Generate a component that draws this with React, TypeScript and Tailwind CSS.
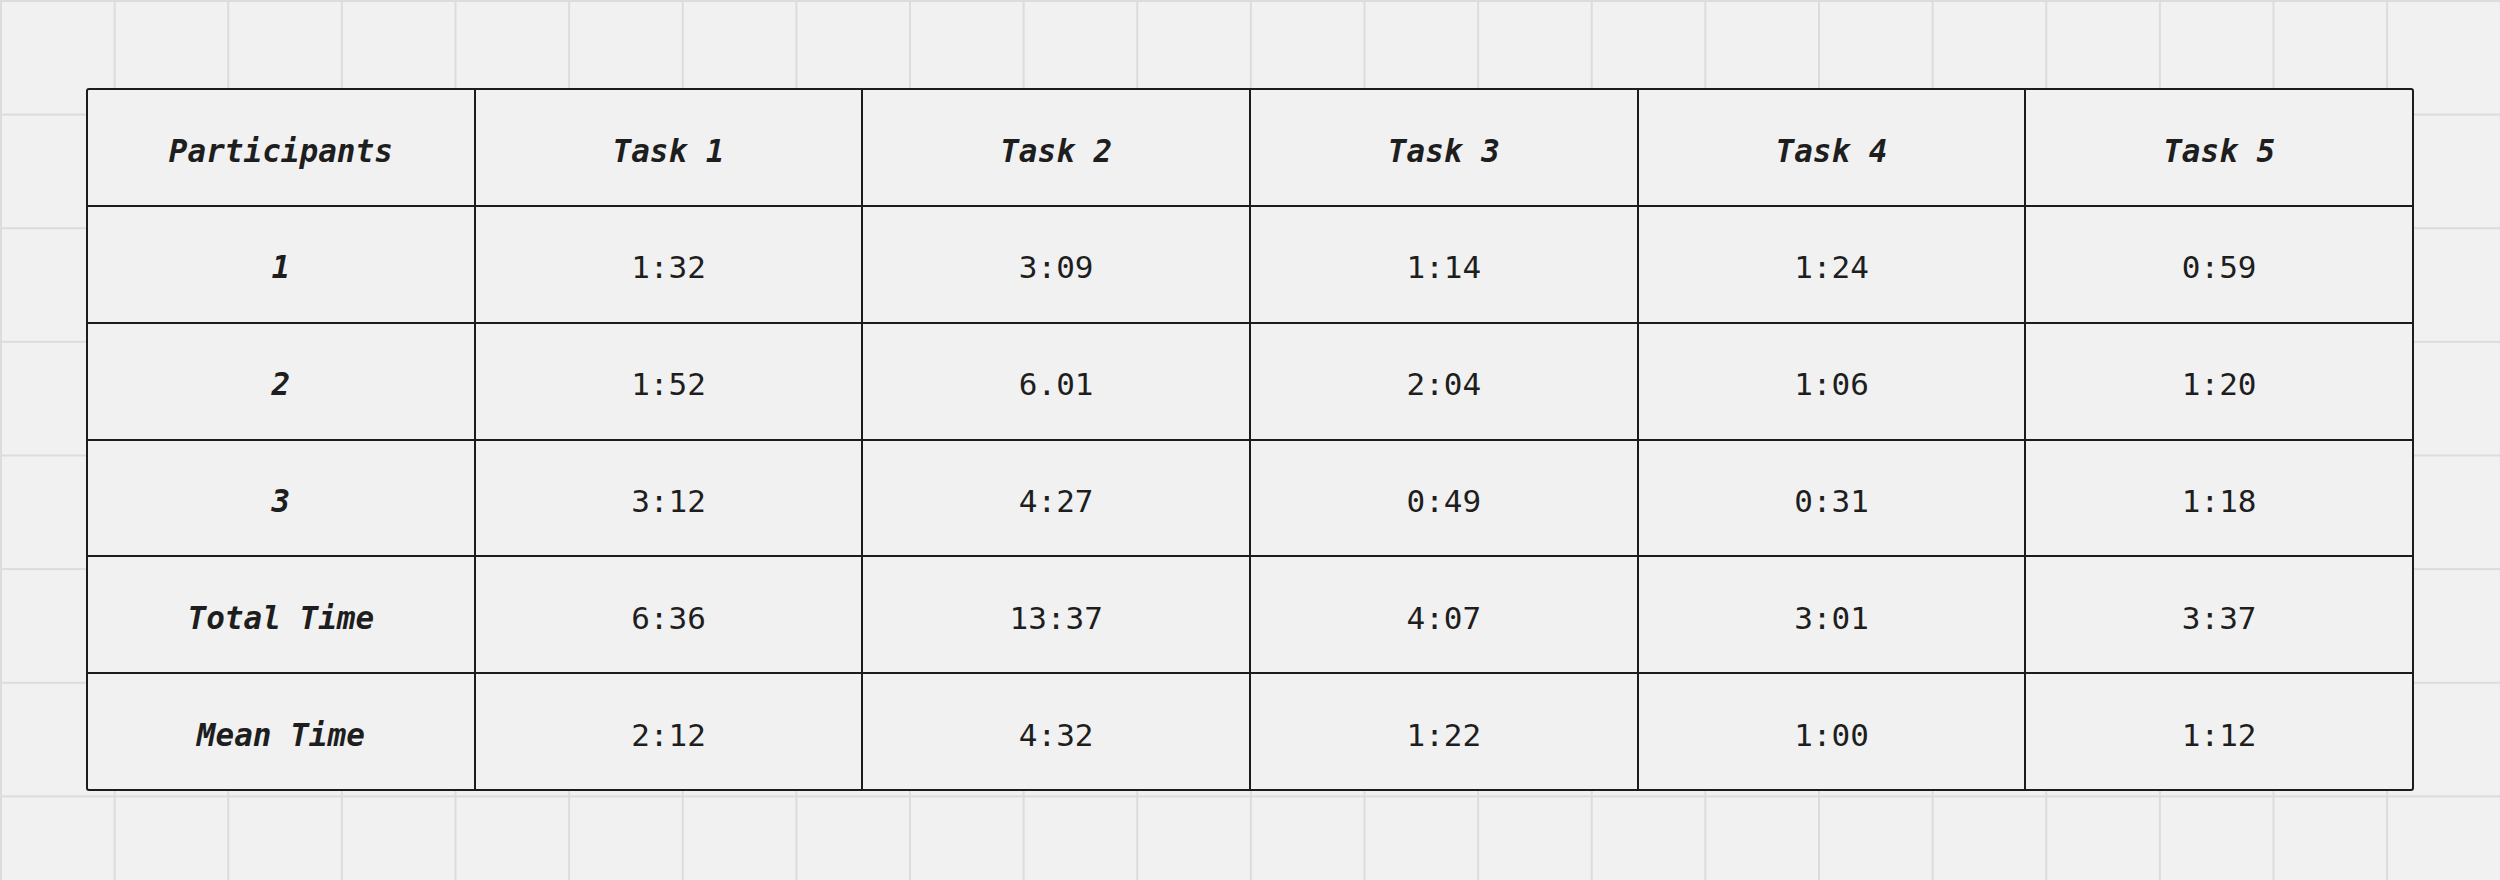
const header = ['Participants', 'Task 1', 'Task 2', 'Task 3', 'Task 4', 'Task 5']

const rows: [string, string[]][] = [
  ['1', ['1:32', '3:09', '1:14', '1:24', '0:59']],
  ['2', ['1:52', '6.01', '2:04', '1:06', '1:20']],
  ['3', ['3:12', '4:27', '0:49', '0:31', '1:18']],
  ['Total Time', ['6:36', '13:37', '4:07', '3:01', '3:37']],
  ['Mean Time', ['2:12', '4:32', '1:22', '1:00', '1:12']],
]

function Cell({ text, bold }: { text: string; bold?: boolean }) {
  return (
    <div
      className={
        bold
          ? 'flex items-center justify-center bg-[#f1f1f1] text-[31px] font-bold italic text-[#1e1e1e]'
          : 'flex items-center justify-center bg-[#f1f1f1] text-[31px] font-normal text-[#1e1e1e]'
      }
    >
      <span className="pt-[7px]">{text}</span>
    </div>
  )
}

export default function App() {
  const all: [string, string[]][] = [[header[0], header.slice(1)], ...rows]

  return (
    <div className="h-[880px] w-[2500px] overflow-hidden bg-[#f1f1f1] bg-[linear-gradient(to_right,#dcdcdc_2px,transparent_2px),linear-gradient(to_bottom,#dcdcdc_2px,transparent_2px)] bg-[size:113.636px_113.636px] pl-[86px] pt-[88px] font-['DejaVu_Sans_Mono',monospace]">
      <div className="grid h-[703px] w-[2328px] grid-cols-6 grid-rows-6 gap-[2px] overflow-hidden rounded-[3px] border-2 border-[#1c1c1c] bg-[#1c1c1c]">
        {all.map(([label, values], r) => [
          <Cell key={`${r}-0`} text={label} bold />,
          ...values.map((v, c) => <Cell key={`${r}-${c + 1}`} text={v} bold={r === 0} />),
        ])}
      </div>
    </div>
  )
}
